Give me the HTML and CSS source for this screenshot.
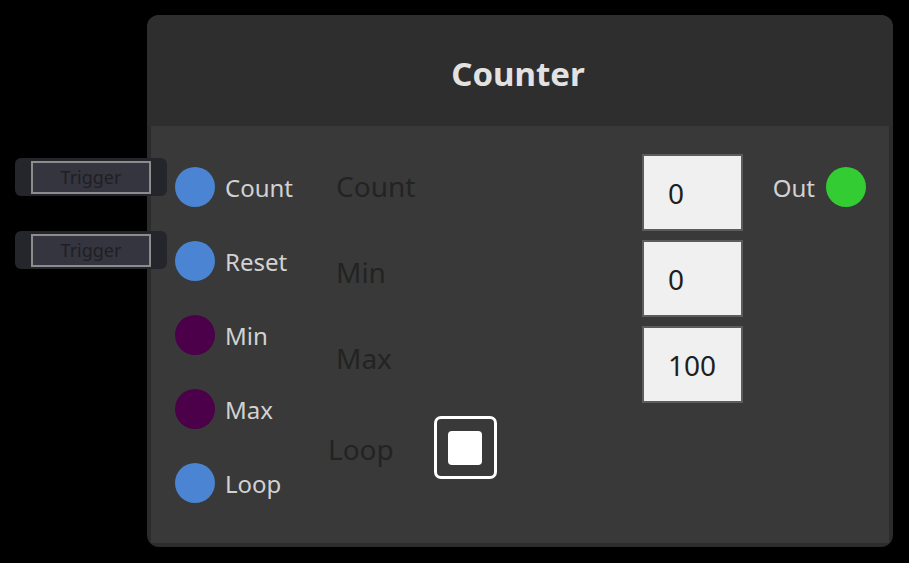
FILE: index.html
```html
<!DOCTYPE html>
<html>
<head>
<meta charset="utf-8">
<link rel="stylesheet" href="styles.css">
</head>
<body>
<div class="node">
  <div class="node-header"><span class="title">Counter</span></div>
  <div class="node-body">
    <div class="inputs">
      <div class="socket-row"><span class="dot blue"></span><span class="socket-label">Count</span></div>
      <div class="socket-row"><span class="dot blue"></span><span class="socket-label">Reset</span></div>
      <div class="socket-row"><span class="dot purple"></span><span class="socket-label">Min</span></div>
      <div class="socket-row"><span class="dot purple"></span><span class="socket-label">Max</span></div>
      <div class="socket-row"><span class="dot blue"></span><span class="socket-label">Loop</span></div>
    </div>
    <div class="controls">
      <div class="fields">
        <span class="field-label">Count</span><div class="num-box">0</div>
        <span class="field-label">Min</span><div class="num-box">0</div>
        <span class="field-label">Max</span><div class="num-box">100</div>
      </div>
      <div class="loop-row">
        <span class="field-label loop-label">Loop</span>
        <div class="checkbox"><div class="check-fill"></div></div>
      </div>
    </div>
    <div class="outputs">
      <div class="socket-row out-row"><span class="socket-label">Out</span><span class="dot green"></span></div>
    </div>
  </div>
  <div class="trigger t1"><div class="trigger-btn">Trigger</div></div>
  <div class="trigger t2"><div class="trigger-btn">Trigger</div></div>
</div>
</body>
</html>
```

FILE: styles.css
```css
html, body {
  margin: 0;
  padding: 0;
  background: #000;
  width: 909px;
  height: 563px;
  overflow: hidden;
  font-family: "Noto Sans", "Open Sans", sans-serif;
}

body {
  padding: 15px 16px 16px 147px;
  box-sizing: border-box;
}

.node {
  position: relative;
  width: 746px;
  height: 532px;
  background: #2c2c2c;
  border-radius: 12px;
  padding: 0 4px 4px 4px;
  box-sizing: border-box;
  display: flex;
  flex-direction: column;
}

.node-header {
  height: 111px;
  display: flex;
  align-items: center;
  justify-content: center;
  background: #2e2e2e;
  border-radius: 12px 12px 0 0;
  margin: 0 -4px;
}

.title {
  color: #e2e2e2;
  font-weight: bold;
  font-size: 33px;
  padding-top: 5px;
  padding-right: 4px;
}

.node-body {
  flex: 1;
  background: #393939;
  display: flex;
  padding: 24px 23px 23px 24px;
}

.inputs {
  width: 152px;
  flex: none;
  display: flex;
  flex-direction: column;
}

.socket-row {
  height: 74px;
  display: flex;
  align-items: center;
  gap: 10px;
}

.dot {
  width: 40px;
  height: 40px;
  border-radius: 50%;
  flex: none;
}

.blue { background: #4a84d2; }
.purple { background: #4b0049; }
.green { background: #33cc33; }

.socket-label {
  color: #d2d2d2;
  font-size: 24px;
}

.controls {
  width: 416px;
  flex: none;
  padding-top: 4px;
}

.fields {
  display: grid;
  grid-template-columns: 306px 101px;
  grid-auto-rows: 77px;
  row-gap: 9px;
  padding-left: 9px;
  align-items: center;
}

.field-label {
  color: #232323;
  font-size: 28px;
  padding-bottom: 14px;
}

.num-box {
  height: 77px;
  box-sizing: border-box;
  background: #f0f0f0;
  border: 2px solid #5c5c5c;
  color: #1e1e1e;
  font-size: 28px;
  display: flex;
  align-items: center;
  padding-left: 24px;
  padding-top: 1px;
}

.loop-row {
  display: flex;
  align-items: center;
  margin-top: 13px;
  gap: 40px;
}

.loop-label {
  padding-bottom: 0;
  padding-top: 2px;
  margin-left: 1px;
}

.checkbox {
  width: 63px;
  height: 63px;
  box-sizing: border-box;
  border: 3px solid #ffffff;
  border-radius: 7px;
  display: flex;
  align-items: center;
  justify-content: center;
}

.check-fill {
  width: 34px;
  height: 34px;
  background: #ffffff;
  border-radius: 4px;
}

.outputs {
  margin-left: auto;
  display: flex;
  flex-direction: column;
}

.out-row {
  gap: 11px;
}

.trigger {
  position: absolute;
  left: -132px;
  width: 152px;
  height: 38px;
  background: #25252c;
  border-radius: 6px;
  display: flex;
  align-items: center;
  padding-left: 16px;
  box-sizing: border-box;
}

.t1 { top: 143px; }
.t2 { top: 216px; }

.trigger-btn {
  width: 120px;
  height: 33px;
  box-sizing: border-box;
  border: 2px solid #8c8c8c;
  background: #35353f;
  color: #1f1f24;
  font-size: 18px;
  display: flex;
  align-items: center;
  justify-content: center;
}
```
